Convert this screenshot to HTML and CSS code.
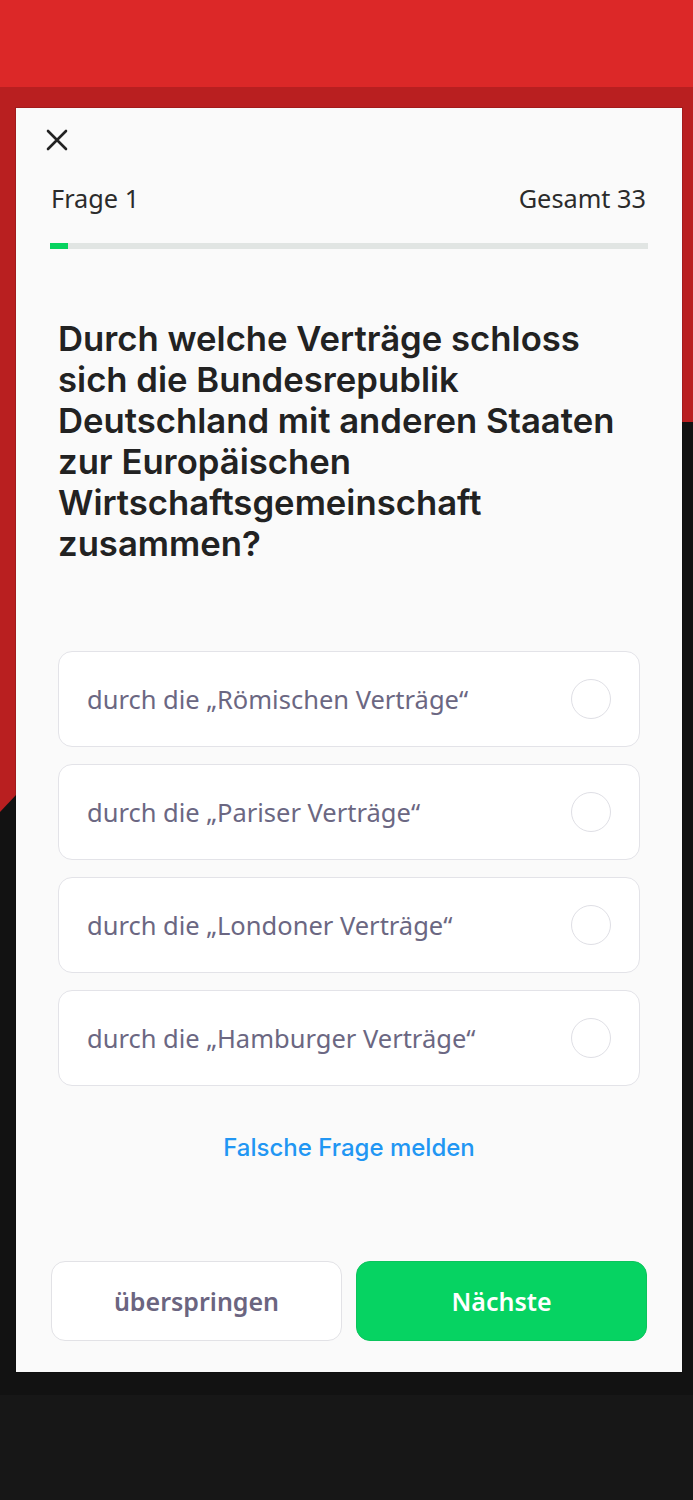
FILE: index.html
```html
<!DOCTYPE html>
<html lang="de">
<head>
    <meta charset="UTF-8">
    <meta name="viewport" content="width=device-width, initial-scale=1.0">
    <title>Frage 1</title>
    <link rel="stylesheet" href="styles.css">
</head>
<body>

<div class="topbar"></div>
<div class="stage">
    <main class="card">
        <button class="close" aria-label="Schließen">
            <svg width="22" height="22" viewBox="0 0 22 22">
                <path d="M2 2 L20 20 M20 2 L2 20" stroke="#222" stroke-width="2.6" stroke-linecap="round" fill="none"/>
            </svg>
        </button>

        <div class="meta">
            <span>Frage 1</span>
            <span>Gesamt 33</span>
        </div>
        <div class="progress"><div class="progress-fill" style="width: 3%"></div></div>

        <h1 class="question">Durch welche Verträge schloss sich die Bundesrepublik Deutschland mit anderen Staaten zur Europäischen Wirtschaftsgemeinschaft zusammen?</h1>

        <div class="answers">
            <label class="answer">
                <span>durch die „Römischen Verträge“</span>
                <span class="radio"></span>
            </label>
            <label class="answer">
                <span>durch die „Pariser Verträge“</span>
                <span class="radio"></span>
            </label>
            <label class="answer">
                <span>durch die „Londoner Verträge“</span>
                <span class="radio"></span>
            </label>
            <label class="answer">
                <span>durch die „Hamburger Verträge“</span>
                <span class="radio"></span>
            </label>
        </div>

        <a class="report" href="#">Falsche Frage melden</a>

        <div class="actions">
            <button class="btn btn-skip">überspringen</button>
            <button class="btn btn-next">Nächste</button>
        </div>
    </main>
</div>

</body>
</html>
```

FILE: styles.css
```css
body {
    margin: 0;
    background-color: #171717;
    font-family: "Noto Sans", "Open Sans", sans-serif;
    min-height: 1500px;
}
.topbar {
    height: 87px;
    background-color: #dc2828; /* helles Rot */
}
.stage {
    position: relative;
    background-color: #b91f20; /* dunkles Rot */
    padding: 21px 11px 23px 16px;
}
/* schwarzer Streifen hinter der Karte */
.stage::before {
    content: "";
    position: absolute;
    inset: 0;
    background-color: #121212;
    clip-path: polygon(0 725px, 16px 708px, 682px 335px, 100% 335px, 100% 100%, 0 100%);
}
.card {
    position: relative;
    box-sizing: border-box;
    height: 1264px;
    background-color: #fafafa;
    box-shadow: 0 0 0 1px rgba(0, 0, 0, 0.12);
    padding: 0 34px 31px 34px;
    display: flex;
    flex-direction: column;
}
.close {
    align-self: flex-start;
    margin: 21px 0 0 -4px;
    padding: 0;
    border: none;
    background: none;
    width: 22px;
    height: 22px;
    cursor: pointer;
}
.close svg {
    display: block;
}
.meta {
    margin-top: 32px;
    display: flex;
    justify-content: space-between;
    font-size: 25.3px;
    line-height: 30px;
    color: #2b2b2b;
    padding-right: 2px;
}
.meta span:first-child {
    padding-left: 1px;
}
.progress {
    margin-top: 30px;
    height: 6px;
    background-color: #e1e5e3;
}
.progress-fill {
    height: 100%;
    background-color: #06d35f;
}
.question {
    margin: 69px 8px 0 8px;
    font-family: Inter, "Noto Sans", sans-serif;
    font-weight: 600;
    font-size: 34.7px;
    line-height: 41px;
    color: #222;
}
.answers {
    margin: 87px 8px 0 8px;
    display: flex;
    flex-direction: column;
    gap: 17px;
}
.answer {
    box-sizing: border-box;
    height: 96px;
    display: flex;
    align-items: center;
    justify-content: space-between;
    padding: 0 28px 0 28px;
    background-color: #fff;
    border: 1.5px solid #e3e3e8;
    border-radius: 14px;
    font-size: 25.5px;
    color: #6b6782;
    cursor: pointer;
}
.radio {
    box-sizing: border-box;
    width: 40px;
    height: 40px;
    border: 1.5px solid #dfdfe5;
    border-radius: 50%;
}
.report {
    margin-top: 47px;
    align-self: center;
    font-family: Inter, "Noto Sans", sans-serif;
    font-weight: 500;
    font-size: 24px;
    line-height: 30px;
    color: #2196f3;
    text-decoration: none;
}
.actions {
    margin-top: auto;
    display: flex;
    gap: 14px;
    padding: 0 1px;
}
.btn {
    flex: 1;
    height: 80px;
    border-radius: 14px;
    font-family: "Noto Sans", sans-serif;
    font-weight: 600;
    font-size: 25px;
    cursor: pointer;
}
.btn-skip {
    background-color: #fff;
    border: 1.5px solid #e2e2e6;
    color: #6b6580;
}
.btn-next {
    background-color: #06d362;
    border: 1.5px solid #0bc45c;
    color: #fff;
}
```
